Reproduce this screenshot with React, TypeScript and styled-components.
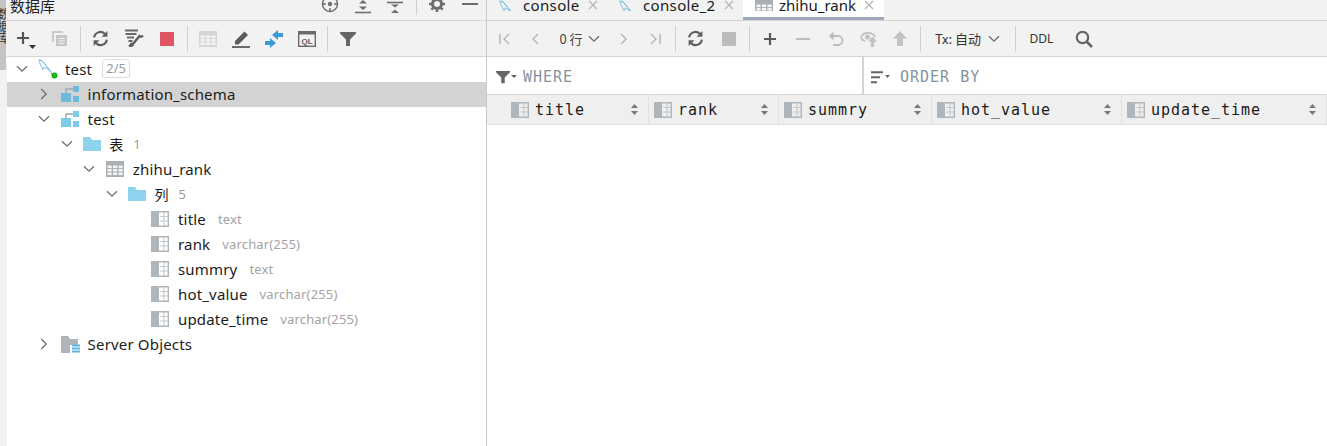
import React from 'react';
import styled, { createGlobalStyle } from 'styled-components';

const GlobalStyle = createGlobalStyle`
  html, body { margin: 0; padding: 0; background: #fff; overflow: hidden; }
  #root { width: 1327px; height: 446px; }
`;

const UI = `"Noto Sans", "Noto Sans CJK SC", sans-serif`;
const CJK = `"Noto Sans CJK SC", "Noto Sans", sans-serif`;
const MONO = `"DejaVu Sans Mono", "Liberation Mono", monospace`;

const Page = styled.div`
  display: flex;
  width: 1327px;
  height: 446px;
  overflow: hidden;
  background: #fff;
  font-family: ${UI};
  color: #1a1a1a;
`;

const SideStrip = styled.div`
  width: 7px;
  flex: none;
  background: #f2f2f2;
`;

const StripTab = styled.div`
  height: 70px;
  background: #c4c4c4;
  overflow: hidden;
  font: 12px ${CJK};
  color: #333;
  writing-mode: vertical-rl;
  padding-top: 8px;
  box-sizing: border-box;
  line-height: 6px;
`;

const LeftPanel = styled.div`
  width: 480px;
  flex: none;
  display: flex;
  flex-direction: column;
  border-right: 1px solid #c9c9c9;
  box-sizing: border-box;
`;

const TitleBar = styled.div`
  height: 21px;
  flex: none;
  display: flex;
  align-items: flex-start;
  justify-content: space-between;
  background: #f2f2f2;
  border-bottom: 1px solid #d4d4d4;
  box-sizing: border-box;
  overflow: hidden;
`;

const PanelTitle = styled.span`
  font: 15px/11px ${CJK};
  margin-left: 3px;
  color: #222;
`;

const TitleTools = styled.div`
  display: flex;
  align-items: flex-start;
  height: 12px;
`;

const TitleTool = styled.div`
  width: 32.5px;
  height: 12px;
  display: flex;
  align-items: center;
  justify-content: center;
`;

const TitleSep = styled.div`
  width: 1px;
  height: 15px;
  margin: 0 4.25px;
  background: #cfcfcf;
`;

const Toolbar = styled.div<{ $pad: number }>`
  height: 36px;
  flex: none;
  display: flex;
  align-items: center;
  background: #f2f2f2;
  border-bottom: 1px solid #d4d4d4;
  box-sizing: border-box;
  padding-left: ${(p) => p.$pad}px;
`;

const ToolButton = styled.div<{ $w?: number }>`
  width: ${(p) => p.$w ?? 33}px;
  height: 28px;
  flex: none;
  display: flex;
  align-items: center;
  justify-content: center;
`;

const ToolSep = styled.div<{ $left?: number }>`
  width: 1px;
  height: 26px;
  background: #cfcfcf;
  margin: 0 3.5px 0 ${(p) => p.$left ?? 3.5}px;
  flex: none;
`;

const Tree = styled.div`
  display: flex;
  flex-direction: column;
  background: #fff;
`;

const Row = styled.div<{ $depth: number; $selected?: boolean }>`
  height: 25px;
  box-sizing: border-box;
  padding-bottom: 2px;
  display: flex;
  align-items: center;
  padding-left: ${(p) => 7 + p.$depth * 22.6}px;
  background: ${(p) => (p.$selected ? '#d3d3d3' : 'transparent')};
  white-space: nowrap;
`;

const Chevron = styled.div`
  width: 24px;
  height: 23px;
  flex: none;
  box-sizing: border-box;
  padding-right: 9px;
  display: flex;
  align-items: center;
  justify-content: center;
`;

const RowIcon = styled.div`
  width: 27px;
  flex: none;
  display: flex;
  align-items: center;
`;

const RowLabel = styled.span<{ $cjk?: boolean }>`
  font-family: ${(p) => (p.$cjk ? CJK : UI)};
  font-size: ${(p) => (p.$cjk ? 14 : 15)}px;
  letter-spacing: ${(p) => (p.$cjk ? 0 : 0.17)}px;
  margin-left: ${(p) => (p.$cjk ? -1 : 0)}px;
  color: #1c1c1c;
`;

const Hint = styled.span`
  margin-left: 12px;
  font-size: 13px;
  letter-spacing: 0.15px;
  color: #a3a3a3;
`;

const Count = styled.span`
  margin-left: 10px;
  font-size: 13px;
  color: #9a9a9a;
`;

const Badge = styled.span`
  margin-left: 10px;
  width: 28px;
  height: 19px;
  box-sizing: border-box;
  border: 1px solid #dcdcdc;
  border-radius: 3px;
  font-size: 13px;
  line-height: 17px;
  text-align: center;
  color: #9a9a9a;
`;

const RightPanel = styled.div`
  flex: 1;
  min-width: 0;
  display: flex;
  flex-direction: column;
`;

const TabBar = styled.div`
  height: 21px;
  flex: none;
  display: flex;
  background: #f2f2f2;
  border-bottom: 1px solid #d4d4d4;
  box-sizing: border-box;
  overflow: hidden;
`;

const Tab = styled.div<{ $w: number; $active?: boolean }>`
  width: ${(p) => p.$w}px;
  height: 20px;
  flex: none;
  display: flex;
  align-items: flex-start;
  box-sizing: border-box;
  padding-left: 12px;
  background: ${(p) => (p.$active ? '#fff' : 'transparent')};
  border-bottom: ${(p) => (p.$active ? '3px solid #9ca9bb' : '0')};
  margin-left: ${(p) => (p.$active ? 1 : 0)}px;
`;

const TabIconWrap = styled.div`
  width: 24px;
  flex: none;
  height: 11px;
  overflow: hidden;
`;

const TabLabel = styled.span<{ $active?: boolean }>`
  font-size: 15px;
  line-height: 11px;
  letter-spacing: ${(p) => (p.$active ? 0 : 0.35)}px;
  color: #1a1a1a;
`;

const TabClose = styled.div`
  margin-left: 8px;
  height: 11px;
  overflow: hidden;
`;

const RowCountText = styled.span`
  font: 13px ${CJK};
  color: #444;
  margin-right: 5px;
`;

const TxLabel = styled.span`
  font: 13px ${CJK};
  color: #333;
  margin-right: 7px;
`;

const DdlLabel = styled.span`
  font: 12px ${UI};
  color: #333;
`;

const FilterRow = styled.div`
  height: 38px;
  flex: none;
  display: flex;
  background: #fff;
  border-bottom: 1px solid #d4d4d4;
  box-sizing: border-box;
`;

const FilterCell = styled.div<{ $w?: number }>`
  display: flex;
  align-items: center;
  box-sizing: border-box;
  padding-top: 3px;
  padding-left: ${(p) => (p.$w ? 9 : 7)}px;
  ${(p) => (p.$w ? `width: ${p.$w}px; border-right: 2px solid #d4d4d4;` : 'flex: 1;')}
`;

const FilterText = styled.span<{ $gap: number }>`
  font: 15px ${MONO};
  letter-spacing: 1px;
  color: #84929e;
  margin-left: ${(p) => p.$gap}px;
`;

const HeaderRow = styled.div`
  height: 30px;
  flex: none;
  display: flex;
  background: #efefef;
  border-bottom: 1px solid #e4e4e4;
  box-sizing: border-box;
`;

const HeaderCell = styled.div<{ $w: number; $pad: number }>`
  width: ${(p) => p.$w}px;
  flex: none;
  display: flex;
  align-items: center;
  box-sizing: border-box;
  padding-left: ${(p) => p.$pad}px;
  padding-right: 10px;
  border-right: 1px solid #e2e2e2;
`;

const HeaderName = styled.span`
  font: 15px ${MONO};
  letter-spacing: 0.97px;
  color: #1a1a1a;
  margin-left: 6px;
  flex: 1;
`;

const Dolphin = ({ dot }: { dot?: boolean }) => (
  <svg width="20" height="20" viewBox="0 0 20 20" fill="none" style={{ display: 'block' }}>
    <path d="M1 .8C4 1.500 6 3.500 7.500 6c1.500 2.500 3.500 3.500 5 6 .6 1 1 2 1.200 3" stroke="#4aa6d6" strokeWidth="1" />
    <path d="M1 .8c.2 2.500 1.200 4.500 2.500 6.700.6 1.200 1 2.500 1.500 3.500.4-.8.6-1.800 1-2.800 1.800.6 3.500 1.800 5 3.300" stroke="#7dbfe2" strokeWidth="1" />
    {dot && <circle cx="16.500" cy="16.500" r="2.700" fill="#12c312" stroke="#0a7d0a" strokeWidth=".6" />}
  </svg>
);

const ChevronDown = () => (
  <svg width="12" height="8" viewBox="0 0 12 8" fill="none">
    <path d="M1 1.200 6 6.200 11 1.200" stroke="#6e6e6e" strokeWidth="1.300" />
  </svg>
);

const ChevronRight = () => (
  <svg width="8" height="12" viewBox="0 0 8 12" fill="none">
    <path d="M1.200 1 6.200 6 1.200 11" stroke="#6e6e6e" strokeWidth="1.300" />
  </svg>
);

const SchemaIcon = ({ dark }: { dark?: boolean }) => {
  const c = dark ? '#6bbbdc' : '#7ccbea';
  return (
    <svg width="18" height="18" viewBox="0 0 18 18" style={{ display: 'block' }}>
      <path d="M5 9V4h7" stroke="#9aa7ad" strokeWidth="1.400" fill="none" />
      <rect x="0" y="8" width="10" height="9" fill={c} />
      <rect x="12" y="1" width="6" height="6" fill={c} />
      <rect x="12" y="11" width="6" height="6" fill={c} />
    </svg>
  );
};

const FolderIcon = () => (
  <svg width="18" height="14" viewBox="0 0 18 14" style={{ display: 'block' }}>
    <path d="M0 0h7l2 3h9v11H0z" fill="#8dd3ee" />
  </svg>
);

const TableIcon = ({ c = '#a9afb4' }: { c?: string }) => (
  <svg width="18" height="16" viewBox="0 0 18 16" style={{ display: 'block' }}>
    <rect x="0" y="0" width="18" height="16" fill={c} />
    {[1.500, 7, 12.500].map((x) =>
      [4.500, 8, 11.500].map((y) => <rect key={`${x}-${y}`} x={x} y={y} width="4.200" height="2.600" fill="#f4f4f4" />)
    )}
  </svg>
);

const ColumnIcon = () => (
  <svg width="18" height="16" viewBox="0 0 18 16" style={{ display: 'block' }}>
    <rect x="0" y="0" width="8" height="16" fill="#aeb6bc" />
    <path d="M8 .7h10M8 15.300h10M17.300 0v16" stroke="#aeb6bc" strokeWidth="1.400" />
    <path d="M9 5.500h8M9 10h8M13 1v14" stroke="#c2c8cc" strokeWidth="1.100" />
  </svg>
);

const ServerIcon = () => (
  <svg width="19" height="18" viewBox="0 0 19 18" style={{ display: 'block' }}>
    <path d="M0 1h7l2 3h8v6H9v8H0z" fill="#aeb6bc" />
    <path d="M11 10.500h8M11 13.500h8M11 16.500h8" stroke="#5fb7e0" strokeWidth="1.800" />
  </svg>
);

const Plus = ({ c = '#5a5a5a' }: { c?: string }) => (
  <svg width="14" height="14" viewBox="0 0 14 14">
    <path d="M7 1v12M1 7h12" stroke={c} strokeWidth="2.200" />
  </svg>
);

const AddIcon = () => (
  <svg width="24" height="24" viewBox="0 0 24 24">
    <path d="M8 5v12M2 11h12" stroke="#555" strokeWidth="2.200" />
    <path d="M14 18h7l-3.500 4z" fill="#333" />
  </svg>
);

const CopyIcon = () => (
  <svg width="16" height="16" viewBox="0 0 16 16" fill="none">
    <path d="M1 11V1h10" stroke="#c0c0c0" strokeWidth="1.600" />
    <rect x="4" y="4" width="11" height="11" fill="#c6c6c6" />
    <path d="M6.500 7.500h6M6.500 10h6M6.500 12.500h6" stroke="#f2f2f2" strokeWidth="1.100" />
  </svg>
);

const Refresh = () => (
  <svg width="17" height="17" viewBox="0 0 16 16" fill="none">
    <path d="M2 7a6 6 0 0 1 10.500-3" stroke="#5f5f5f" strokeWidth="2.100" />
    <path d="M14.500 1v5.400H9z" fill="#5f5f5f" />
    <path d="M14 9a6 6 0 0 1-10.500 3" stroke="#5f5f5f" strokeWidth="2.100" />
    <path d="M1.500 15V9.600H7z" fill="#5f5f5f" />
  </svg>
);

const DbToolIcon = () => (
  <svg width="20" height="19" viewBox="0 0 20 19" fill="none">
    <path d="M1 1.500h13M1.500 5h11M3 8.500h7M4.500 12h4" stroke="#6a6a6a" strokeWidth="2" />
    <path d="M19 6.500c-1 1-2.500 1.500-3.500.6L9 15a2 2 0 0 1-3 1.600L8 14" stroke="#5f5f5f" strokeWidth="2.400" />
  </svg>
);

const StopIcon = ({ c = '#e05561' }: { c?: string }) => (
  <svg width="14" height="14" viewBox="0 0 14 14"><rect width="14" height="14" fill={c} /></svg>
);

const PencilIcon = () => (
  <svg width="18" height="18" viewBox="0 0 18 18" fill="none">
    <path d="M3 11 12.500 1.500 16 5 6.500 14.500H3z" fill="#5c5c5c" />
    <path d="M0 17h18" stroke="#5c5c5c" strokeWidth="1.800" />
  </svg>
);

const MergeIcon = () => (
  <svg width="18" height="18" viewBox="0 0 18 18">
    <path d="M7 5 13 0v3h5v4h-5v3z" fill="#3a9bd8" />
    <path d="M11 13 5 18v-3H0v-4h5V8z" fill="#3a9bd8" />
  </svg>
);

const QlIcon = () => (
  <svg width="18" height="16" viewBox="0 0 18 16">
    <rect x=".7" y=".7" width="16.600" height="14.600" fill="#f2f2f2" stroke="#6a6a6a" strokeWidth="1.400" />
    <rect x="0" y="0" width="18" height="3.500" fill="#6a6a6a" />
    <text x="9" y="12.500" textAnchor="middle" fontSize="8" fontWeight="700" fontFamily="Liberation Sans" fill="#5a5a5a">QL</text>
  </svg>
);

const FunnelIcon = ({ size = 16 }: { size?: number }) => (
  <svg width={size} height={size} viewBox="0 0 16 16">
    <path d="M0 1h16v1.500L10 8.500V15H6V8.500L0 2.500z" fill="#666" />
  </svg>
);

const TargetIcon = () => (
  <svg width="18" height="18" viewBox="0 0 18 18" fill="none" style={{ marginTop: -4, flex: 'none' }}>
    <circle cx="9" cy="9" r="7.500" stroke="#6e6e6e" strokeWidth="1.500" />
    <circle cx="9" cy="9" r="2.200" fill="#6e6e6e" />
    <path d="M9 1v4M9 13v4M1 9h4M13 9h4" stroke="#6e6e6e" strokeWidth="1.500" />
  </svg>
);

const ExpandIcon = () => (
  <svg width="16" height="14" viewBox="0 0 16 14" style={{ marginTop: 2, flex: 'none' }}>
    <path d="M8 0 4 3.500h8zM4 6.500h8L8 10z" fill="#6e6e6e" />
    <path d="M0 12.500h16" stroke="#6e6e6e" strokeWidth="1.600" />
  </svg>
);

const CollapseIcon = () => (
  <svg width="16" height="14" viewBox="0 0 16 14" style={{ marginTop: 4, flex: 'none' }}>
    <path d="M0 1.500h16" stroke="#6e6e6e" strokeWidth="1.600" />
    <path d="M4 3.500h8L8 6.500zM8 8.500l4 3.500H4z" fill="#6e6e6e" />
  </svg>
);

const GearIcon = () => (
  <svg width="16" height="16" viewBox="0 0 16 16" fill="none" style={{ marginTop: -4, flex: 'none' }}>
    <circle cx="8" cy="8" r="4.500" stroke="#6e6e6e" strokeWidth="3" />
    <path d="M8 0v3M8 13v3M0 8h3M13 8h3M2.300 2.300l2 2M11.700 11.700l2 2M13.700 2.300l-2 2M4.300 11.700l-2 2" stroke="#6e6e6e" strokeWidth="2.400" />
  </svg>
);

const MinusBar = () => (
  <svg width="16" height="2" viewBox="0 0 16 2" style={{ marginTop: -5, flex: 'none' }}><rect width="16" height="2" fill="#6e6e6e" /></svg>
);

const CloseX = () => (
  <svg width="10" height="10" viewBox="0 0 10 10" fill="none" style={{ display: 'block' }}>
    <path d="M1 1l8 8M9 1l-8 8" stroke="#b5b5b5" strokeWidth="1.200" />
  </svg>
);

const Nav = ({ d, c = '#b4b4b4' }: { d: string; c?: string }) => (
  <svg width="14" height="14" viewBox="0 0 14 14" fill="none">
    <path d={d} stroke={c} strokeWidth="1.400" />
  </svg>
);

const UndoIcon = () => (
  <svg width="16" height="15" viewBox="0 0 16 15" fill="none">
    <path d="M4.500 5H10a4.500 4.500 0 0 1 0 9H5" stroke="#bcbcbc" strokeWidth="1.800" />
    <path d="M1 5l4.500-4.500v9z" fill="#bcbcbc" />
  </svg>
);

const EyeUpIcon = () => (
  <svg width="18" height="16" viewBox="0 0 18 16" fill="none">
    <path d="M.8 6.500c2.500-6 11.500-6 14.500-.5M.8 6.500c1 2 2.500 3 4.500 3.500" stroke="#c2c2c2" strokeWidth="1.800" />
    <circle cx="7.500" cy="6" r="2.500" fill="#c2c2c2" />
    <path d="M12.500 5.500 8 10.500h2.800V16h3.400v-5.500H17z" fill="#c2c2c2" />
  </svg>
);

const UpIcon = () => (
  <svg width="14" height="15" viewBox="0 0 14 15">
    <path d="M7 0 0 7.500h4V15h6V7.500h4z" fill="#c2c2c2" />
  </svg>
);

const SearchIcon = () => (
  <svg width="18" height="18" viewBox="0 0 18 18" fill="none">
    <circle cx="7.500" cy="7.500" r="5.700" stroke="#666" strokeWidth="2.200" />
    <path d="M11.500 11.500 17 17" stroke="#666" strokeWidth="2.600" />
  </svg>
);

const SortIcon = () => (
  <svg width="7" height="11" viewBox="0 0 7 11" style={{ flex: 'none' }}>
    <path d="M3.500 0 7 4H0zM0 7h7l-3.500 4z" fill="#777" />
  </svg>
);

const OrderIcon = () => (
  <svg width="19" height="13" viewBox="0 0 19 13">
    <path d="M0 1.200h12M0 6.200h9M0 11.200h6" stroke="#666" strokeWidth="2" />
    <path d="M14 4h5l-2.500 3z" fill="#666" />
  </svg>
);

const columns = [
  { name: 'title', type: 'text' },
  { name: 'rank', type: 'varchar(255)' },
  { name: 'summry', type: 'text' },
  { name: 'hot_value', type: 'varchar(255)' },
  { name: 'update_time', type: 'varchar(255)' },
];

const headers = [
  { name: 'title', w: 162, pad: 24 },
  { name: 'rank', w: 130, pad: 5 },
  { name: 'summry', w: 153, pad: 5 },
  { name: 'hot_value', w: 190, pad: 5 },
  { name: 'update_time', w: 205, pad: 5 },
];

const App = () => (
  <Page>
    <GlobalStyle />
    <SideStrip>
      <StripTab>数据库</StripTab>
    </SideStrip>
    <LeftPanel>
      <TitleBar>
        <PanelTitle>数据库</PanelTitle>
        <TitleTools>
          <TitleTool><TargetIcon /></TitleTool>
          <TitleTool><ExpandIcon /></TitleTool>
          <TitleTool><CollapseIcon /></TitleTool>
          <TitleSep />
          <TitleTool><GearIcon /></TitleTool>
          <TitleTool><MinusBar /></TitleTool>
        </TitleTools>
      </TitleBar>
      <Toolbar $pad={3}>
        <ToolButton><AddIcon /></ToolButton>
        <ToolButton><CopyIcon /></ToolButton>
        <ToolSep />
        <ToolButton><Refresh /></ToolButton>
        <ToolButton><DbToolIcon /></ToolButton>
        <ToolButton><StopIcon /></ToolButton>
        <ToolSep />
        <ToolButton><TableIcon c="#d6d6d6" /></ToolButton>
        <ToolButton><PencilIcon /></ToolButton>
        <ToolButton><MergeIcon /></ToolButton>
        <ToolButton><QlIcon /></ToolButton>
        <ToolSep />
        <ToolButton><FunnelIcon /></ToolButton>
      </Toolbar>
      <Tree>
        <Row $depth={0}>
          <Chevron><ChevronDown /></Chevron>
          <RowIcon><Dolphin dot /></RowIcon>
          <RowLabel>test</RowLabel>
          <Badge>2/5</Badge>
        </Row>
        <Row $depth={1} $selected>
          <Chevron><ChevronRight /></Chevron>
          <RowIcon><SchemaIcon dark /></RowIcon>
          <RowLabel>information_schema</RowLabel>
        </Row>
        <Row $depth={1}>
          <Chevron><ChevronDown /></Chevron>
          <RowIcon><SchemaIcon /></RowIcon>
          <RowLabel>test</RowLabel>
        </Row>
        <Row $depth={2}>
          <Chevron><ChevronDown /></Chevron>
          <RowIcon><FolderIcon /></RowIcon>
          <RowLabel $cjk>表</RowLabel>
          <Count>1</Count>
        </Row>
        <Row $depth={3}>
          <Chevron><ChevronDown /></Chevron>
          <RowIcon><TableIcon /></RowIcon>
          <RowLabel>zhihu_rank</RowLabel>
        </Row>
        <Row $depth={4}>
          <Chevron><ChevronDown /></Chevron>
          <RowIcon><FolderIcon /></RowIcon>
          <RowLabel $cjk>列</RowLabel>
          <Count>5</Count>
        </Row>
        {columns.map((c) => (
          <Row $depth={5} key={c.name}>
            <Chevron />
            <RowIcon><ColumnIcon /></RowIcon>
            <RowLabel>{c.name}</RowLabel>
            <Hint>{c.type}</Hint>
          </Row>
        ))}
        <Row $depth={1}>
          <Chevron><ChevronRight /></Chevron>
          <RowIcon><ServerIcon /></RowIcon>
          <RowLabel>Server Objects</RowLabel>
        </Row>
      </Tree>
    </LeftPanel>
    <RightPanel>
      <TabBar>
        <Tab $w={120}>
          <TabIconWrap><Dolphin /></TabIconWrap>
          <TabLabel>console</TabLabel>
          <TabClose><CloseX /></TabClose>
        </Tab>
        <Tab $w={135}>
          <TabIconWrap><Dolphin /></TabIconWrap>
          <TabLabel>console_2</TabLabel>
          <TabClose><CloseX /></TabClose>
        </Tab>
        <Tab $w={141} $active>
          <TabIconWrap><TableIcon /></TabIconWrap>
          <TabLabel $active>zhihu_rank</TabLabel>
          <TabClose><CloseX /></TabClose>
        </Tab>
      </TabBar>
      <Toolbar $pad={2}>
        <ToolButton $w={32}><Nav d="M2 2v10M11 2 6 7l5 5" /></ToolButton>
        <ToolButton $w={30}><Nav d="M9 2 4 7l5 5" /></ToolButton>
        <ToolButton $w={57}><RowCountText>0 行</RowCountText><ChevronDown /></ToolButton>
        <ToolButton $w={30}><Nav d="M5 2l5 5-5 5" /></ToolButton>
        <ToolButton $w={33}><Nav d="M3 2l5 5-5 5M12 2v10" /></ToolButton>
        <ToolSep />
        <ToolButton><Refresh /></ToolButton>
        <ToolButton><StopIcon c="#bcbcbc" /></ToolButton>
        <ToolSep />
        <ToolButton><Plus /></ToolButton>
        <ToolButton><svg width="14" height="2" viewBox="0 0 14 2"><rect width="14" height="2" fill="#bcbcbc" /></svg></ToolButton>
        <ToolButton><UndoIcon /></ToolButton>
        <ToolButton><EyeUpIcon /></ToolButton>
        <ToolButton $w={29}><UpIcon /></ToolButton>
        <ToolSep $left={5.500} />
        <ToolButton $w={87}><TxLabel>Tx: 自动</TxLabel><ChevronDown /></ToolButton>
        <ToolSep />
        <ToolButton $w={45}><DdlLabel>DDL</DdlLabel></ToolButton>
        <ToolButton $w={40}><SearchIcon /></ToolButton>
      </Toolbar>
      <FilterRow>
        <FilterCell $w={377}>
          <FunnelIcon size={14} />
          <svg width="6" height="4" viewBox="0 0 6 4" style={{ marginLeft: 1 }}><path d="M0 0h6L3 3z" fill="#666" /></svg>
          <FilterText $gap={6}>WHERE</FilterText>
        </FilterCell>
        <FilterCell>
          <OrderIcon />
          <FilterText $gap={10}>ORDER BY</FilterText>
        </FilterCell>
      </FilterRow>
      <HeaderRow>
        {headers.map((h) => (
          <HeaderCell key={h.name} $w={h.w} $pad={h.pad}>
            <ColumnIcon />
            <HeaderName>{h.name}</HeaderName>
            <SortIcon />
          </HeaderCell>
        ))}
      </HeaderRow>
    </RightPanel>
  </Page>
);

export default App;
